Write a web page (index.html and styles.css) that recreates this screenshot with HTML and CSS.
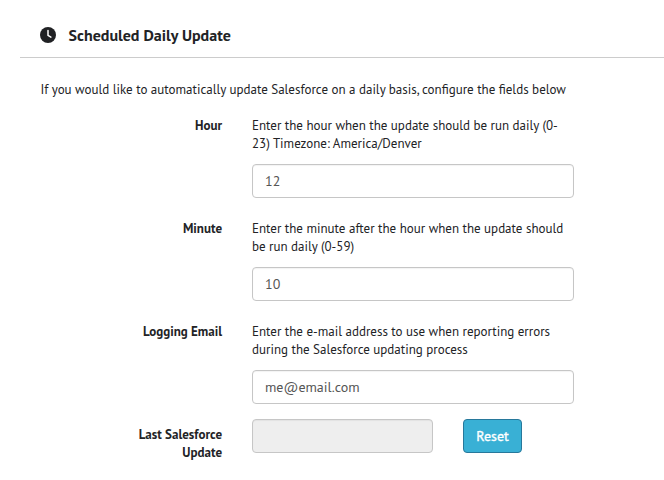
FILE: index.html
```
<!DOCTYPE html>
<html lang="en">
<head>
<meta charset="utf-8">
<title>Scheduled Daily Update</title>
<link rel="stylesheet" href="styles.css">
</head>
<body>
<header class="panel-header">
  <svg class="clock" viewBox="0 0 16 16" aria-hidden="true"><circle cx="8" cy="8" r="8" fill="#202124"/><path d="M8 3.6V8.4L10.9 10.2" fill="none" stroke="#fff" stroke-width="1.5" stroke-linecap="round" stroke-linejoin="round"/></svg>
  <h1 class="title">Scheduled Daily Update</h1>
</header>
<main class="panel-body">
  <p class="intro">If you would like to automatically update Salesforce on a daily basis, configure the fields below</p>
  <form class="form">
    <div class="row">
      <label class="label" for="hour">Hour</label>
      <div class="field">
        <p class="help">Enter the hour when the update should be run daily (0-<br>23) Timezone: America/Denver</p>
        <input class="input" id="hour" type="text" value="12">
      </div>
    </div>
    <div class="row">
      <label class="label" for="minute">Minute</label>
      <div class="field">
        <p class="help">Enter the minute after the hour when the update should<br>be run daily (0-59)</p>
        <input class="input" id="minute" type="text" value="10">
      </div>
    </div>
    <div class="row">
      <label class="label" for="email">Logging Email</label>
      <div class="field">
        <p class="help">Enter the e-mail address to use when reporting errors<br>during the Salesforce updating process</p>
        <input class="input" id="email" type="text" value="me@email.com">
      </div>
    </div>
    <div class="row row-last">
      <label class="label" for="last">Last Salesforce<br>Update</label>
      <div class="field field-inline">
        <input class="input input-disabled" id="last" type="text" disabled>
        <button class="button" type="button">Reset</button>
      </div>
    </div>
  </form>
</main>
</body>
</html>
```
FILE: styles.css
```
* { box-sizing: border-box; }
body {
  margin: 0;
  background: #fff;
  color: #222326;
  font: 13px/18px "PT Sans", "Noto Sans", sans-serif;
}
h1, p { margin: 0; }
.panel-header {
  display: flex;
  align-items: center;
  gap: 12.5px;
  height: 58px;
  margin-left: 20px;
  padding: 12px 0 0 20px;
  border-bottom: 1px solid #ccc;
}
.clock { width: 16px; height: 16px; }
.title {
  font-size: 16px;
  line-height: 22px;
  font-weight: 700;
  white-space: nowrap;
}
.panel-body { padding: 23px 0 0 40.5px; }
.intro { white-space: nowrap; }
.form { margin-top: 18px; }
.row {
  display: grid;
  grid-template-columns: 181.5px 322px;
  column-gap: 30px;
  height: 103px;
}
.row-last { height: 45px; }
.label {
  font-weight: 700;
  text-align: right;
}
.help {
  height: 47px;
  white-space: nowrap;
}
.input {
  display: block;
  width: 100%;
  height: 34px;
  padding: 0 12px;
  border: 1px solid #c6c6c6;
  border-radius: 4px;
  background: #fff;
  box-shadow: inset 0 1px 1px rgba(0, 0, 0, 0.05);
  color: #555;
  font: 14px/20px "PT Sans", "Noto Sans", sans-serif;
}
.field-inline {
  display: flex;
  gap: 30px;
  margin-top: -7px;
}
.input-disabled { width: 181px; background: #eee; }
.button {
  width: 59px;
  height: 34px;
  padding: 0;
  border: 1px solid #27789b;
  border-radius: 4px;
  background: #39b0d5;
  color: #fff;
  font: 14px/20px "PT Sans", "Noto Sans", sans-serif;
  -webkit-text-stroke: 0.35px #fff;
}
```
